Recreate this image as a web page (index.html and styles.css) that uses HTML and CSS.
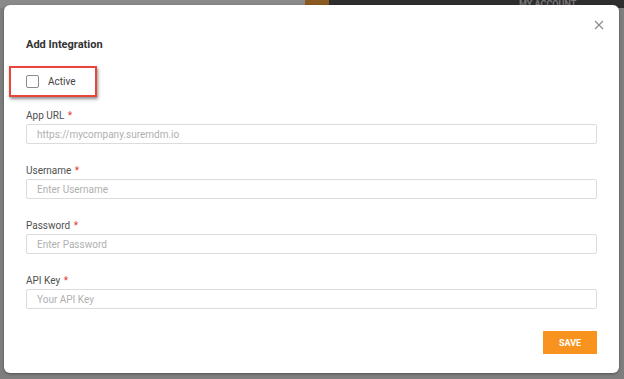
FILE: index.html
```html
<!DOCTYPE html>
<html>
<head>
<meta charset="utf-8">
<link rel="stylesheet" href="styles.css">
</head>
<body>
<div class="page">
  <div class="topbar">
    <div class="search-btn"></div>
    <div class="account">MY ACCOUNT</div>
  </div>
</div>
<div class="overlay">
  <div class="modal">
    <button class="close" aria-label="Close">
      <svg width="10" height="10" viewBox="0 0 10 10"><path d="M1 1L9 9M9 1L1 9" stroke="#8a8a8a" stroke-width="1.1" fill="none"/></svg>
    </button>
    <h2 class="title">Add Integration</h2>
    <div class="active-row">
      <span class="checkbox"></span>
      <span class="active-label">Active</span>
    </div>
    <div class="fields">
      <div class="field">
        <label class="label">App URL <span class="req">*</span></label>
        <div class="input">https://mycompany.suremdm.io</div>
      </div>
      <div class="field">
        <label class="label">Username <span class="req">*</span></label>
        <div class="input">Enter Username</div>
      </div>
      <div class="field">
        <label class="label">Password <span class="req">*</span></label>
        <div class="input">Enter Password</div>
      </div>
      <div class="field">
        <label class="label">API Key <span class="req">*</span></label>
        <div class="input">Your API Key</div>
      </div>
    </div>
    <div class="actions">
      <button class="save">SAVE</button>
    </div>
  </div>
</div>
</body>
</html>
```
FILE: styles.css
```css
html, body {
  margin: 0;
  padding: 0;
}
body {
  width: 624px;
  height: 379px;
  overflow: hidden;
  background: #7e7e7e;
  font-family: Roboto, "Liberation Sans", sans-serif;
  position: relative;
}
.page {
  height: 379px;
}
.topbar {
  height: 8px;
  display: flex;
  background: #8a8a8a;
}
.search-btn {
  margin-left: 305px;
  width: 24px;
  background: #8a5a20;
}
.account {
  flex: 1;
  background: #2e2e2e;
  color: #777;
  font-size: 9px;
  font-weight: bold;
  line-height: 8px;
  padding-left: 190px;
  overflow: hidden;
}
.overlay {
  position: absolute;
  inset: 0;
}
.modal {
  position: absolute;
  left: 4px;
  top: 5px;
  width: 615px;
  height: 368px;
  box-sizing: border-box;
  background: #fff;
  border-radius: 6px;
  box-shadow: 0 1px 3px rgba(0,0,0,0.35);
  padding: 33px 22px 0 22px;
}
.close {
  position: absolute;
  top: 13px;
  right: 13px;
  width: 14px;
  height: 14px;
  padding: 2px;
  border: 0;
  background: none;
  display: flex;
  align-items: center;
  justify-content: center;
}
.title {
  margin: 0;
  font-size: 11px;
  line-height: 14px;
  font-weight: 700;
  color: #333;
}
.active-row {
  margin-top: 14px;
  margin-left: -17px;
  width: 88px;
  height: 31px;
  box-sizing: border-box;
  border: 2px solid #e8463b;
  box-shadow: 1px 2px 3px rgba(0,0,0,0.45);
  display: flex;
  align-items: center;
  padding-left: 15px;
}
.checkbox {
  width: 13px;
  height: 13px;
  box-sizing: border-box;
  border: 1px solid #8c8c8c;
  border-radius: 2px;
}
.active-label {
  margin-left: 9px;
  font-size: 10px;
  color: #444;
}
.fields {
  margin-top: 13px;
  display: flex;
  flex-direction: column;
  gap: 21px;
}
.field {
  display: flex;
  flex-direction: column;
}
.label {
  font-size: 10px;
  line-height: 12px;
  color: #505050;
  margin-bottom: 2px;
}
.req {
  color: #e53935;
  margin-left: 1px;
}
.input {
  height: 20px;
  box-sizing: border-box;
  border: 1px solid #dcdcdc;
  border-radius: 2px;
  padding-left: 10px;
  font-size: 10px;
  line-height: 19px;
  color: #b0b0b0;
}
.actions {
  margin-top: 22px;
  display: flex;
  justify-content: flex-end;
}
.save {
  width: 54px;
  height: 23px;
  border: 0;
  background: #f7931e;
  color: #fff;
  font-family: Roboto, "Liberation Sans", sans-serif;
  font-weight: 700;
  font-size: 9px;
  padding: 0;
}
```
